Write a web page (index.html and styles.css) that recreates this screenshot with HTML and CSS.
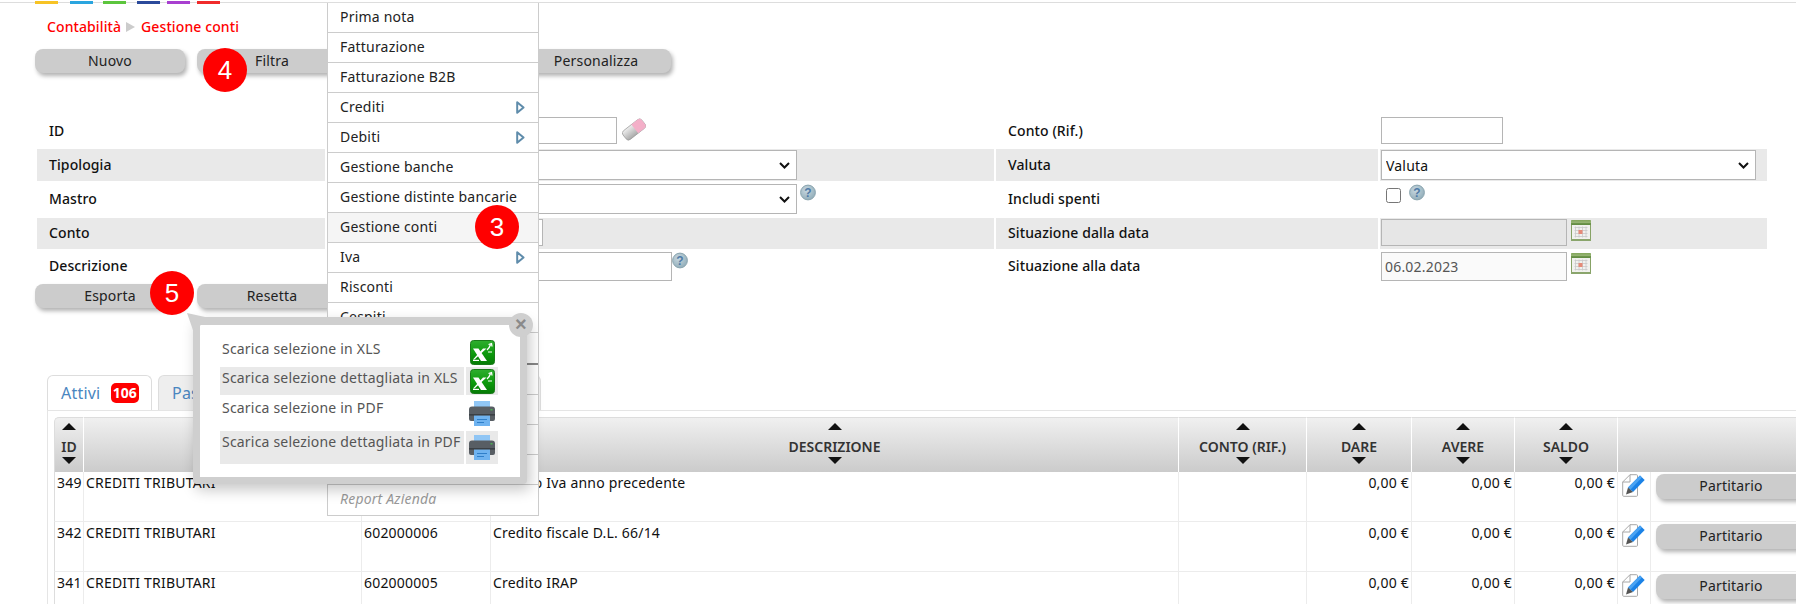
FILE: index.html
```html
<!DOCTYPE html>
<html lang="it">
<head>
<meta charset="utf-8">
<title>Gestione conti</title>
<link rel="stylesheet" href="styles.css">
</head>
<body>
<svg class="defs" aria-hidden="true">
  <defs>
    <linearGradient id="g-eraser" x1="0" y1="0" x2="0" y2="1"><stop offset="0" stop-color="#eee"/><stop offset="1" stop-color="#aaa"/></linearGradient>
    <radialGradient id="g-help" cx=".4" cy=".35" r=".8"><stop offset="0" stop-color="#c8d8e0"/><stop offset="1" stop-color="#87a5b2"/></radialGradient>
    <linearGradient id="g-xls" x1="0" y1="0" x2="0" y2="1"><stop offset="0" stop-color="#2fae2f"/><stop offset=".55" stop-color="#0c9a0c"/><stop offset="1" stop-color="#067a06"/></linearGradient>
    <linearGradient id="g-cal" x1="0" y1="0" x2="0" y2="1"><stop offset="0" stop-color="#8aab62"/><stop offset="1" stop-color="#5f8a40"/></linearGradient>
    <symbol id="i-arrow" viewBox="0 0 9 13"><path d="M1.2 1.2 L7.5 6.5 L1.2 11.8 Z" fill="#fff" stroke="#5f8cab" stroke-width="2" stroke-linejoin="round"/></symbol>
    <symbol id="i-eraser" viewBox="0 0 24 23">
      <g transform="rotate(-38 12 11.5)">
        <rect x="0" y="6" width="24" height="11" rx="3" fill="url(#g-eraser)" stroke="#999" stroke-width=".7"/>
        <path d="M13 6 H21 A3 3 0 0 1 24 9 V14 A3 3 0 0 1 21 17 H13 Z" fill="#f3afc8"/>
      </g>
    </symbol>
    <symbol id="i-help" viewBox="0 0 16 17">
      <circle cx="8" cy="8.5" r="7.4" fill="url(#g-help)" stroke="#8aa4ae" stroke-width="1"/>
      <text x="8" y="13" text-anchor="middle" font-family="Liberation Sans, sans-serif" font-weight="700" font-size="12" fill="#4f7aa6">?</text>
    </symbol>
    <symbol id="i-cal" viewBox="0 0 20 21">
      <rect x=".5" y=".5" width="19" height="20" rx="1" fill="#f1f1ee" stroke="#87a266"/>
      <rect x="0" y="0" width="20" height="5" rx="1" fill="url(#g-cal)"/>
      <rect x="0" y="1.6" width="20" height="1" fill="#a9c488"/>
      <rect x="0" y="19" width="20" height="2" fill="#8aa56c"/>
      <path d="M3.5 7.5H16.5M3.5 10.5H16.5M3.5 13.5H16.5M3.5 16.5H16.5M4.5 6.5V17.5M8 6.5V17.5M11.5 6.5V17.5M15 6.5V17.5" stroke="#c9c9c9" stroke-width=".8"/>
      <rect x="7.5" y="10" width="4" height="4" fill="#e58a78"/>
    </symbol>
    <symbol id="i-xls" viewBox="0 0 25 25">
      <rect x=".5" y=".5" width="24" height="24" rx="3" fill="url(#g-xls)" stroke="#1a7a1a"/>
      <path d="M3 8.5 H8.5 L17 21 H11 Z" fill="#fff"/>
      <path d="M16.5 8.5 L4.5 19.5 H3 L13 8.5 Z" fill="#fff"/>
      <path d="M3 21 H9 V19.8 H3 Z" fill="#fff"/>
      <path d="M17 10 Q19.5 8 20.5 4.5 M18.5 4.5 L21.5 3.5 L22 6.5" stroke="#fff" stroke-width="1.3" fill="none"/>
      <path d="M18 12 H22" stroke="#fff" stroke-width="1"/>
    </symbol>
    <symbol id="i-print" viewBox="0 0 26 25">
      <rect x="5" y="0" width="16" height="8" fill="#90c6f5"/>
      <path d="M3 5.5 H23 A3 3 0 0 1 26 8.5 V18 A2 2 0 0 1 24 20 H2 A2 2 0 0 1 0 18 V8.5 A3 3 0 0 1 3 5.5Z" fill="#585e64"/>
      <rect x="0" y="13" width="26" height="1.6" fill="#3b4045"/>
      <rect x="21.5" y="8" width="2" height="1.5" fill="#4caf50"/>
      <rect x="5" y="14.6" width="16" height="10.4" fill="#6fb3f0"/>
      <path d="M8 18.5 H18 M8 21.5 H15" stroke="#2f7fc9" stroke-width="1"/>
    </symbol>
    <symbol id="i-pencil" viewBox="0 0 23 23">
      <path d="M.7 8 L8 .7 H14.5 A1 1 0 0 1 15.5 1.7 V21.3 A1 1 0 0 1 14.5 22.3 H1.7 A1 1 0 0 1 .7 21.3 Z" fill="#fff" stroke="#a8a8a8"/>
      <path d="M.7 8 H8 V.7" fill="none" stroke="#a8a8a8"/>
      <path d="M18 1.5 L22.7 6 L11 18 L6 13.5 Z" fill="#1b82e6"/>
      <path d="M18 1.5 L20 3.4 L8.5 15.5 L6 13.5 Z" fill="#4ba3f2"/>
      <path d="M6 13.5 L11 18 L4 20.5 Z" fill="#555"/>
    </symbol>
  </defs>
</svg>

<header class="topline">
  <span class="tick tick-a"></span><span class="tick tick-b"></span><span class="tick tick-c"></span><span class="tick tick-d"></span><span class="tick tick-e"></span><span class="tick tick-f"></span>
</header>

<main class="page">
  <nav class="crumbs"><span>Contabilità</span><i class="crumb-sep"></i><span>Gestione conti</span></nav>

  <div class="btnrow">
    <button class="btn">Nuovo</button>
    <button class="btn">Filtra</button>
    <button class="btn">Ordina</button>
    <button class="btn">Personalizza</button>
  </div>

  <section class="form">
    <div class="lab r-a">ID</div>
    <div class="val pad-a"><input class="fld w-id"><svg class="ic-eraser"><use href="#i-eraser"/></svg></div>
    <div class="lab r-a">Conto (Rif.)</div>
    <div class="val2 pad-a"><input class="fld w-rif"></div>

    <div class="lab shade">Tipologia</div>
    <div class="val shade pad-b"><select class="sel w-sel"><option></option></select></div>
    <div class="lab shade">Valuta</div>
    <div class="val2 shade pad-b"><select class="sel w-val"><option>Valuta</option></select></div>

    <div class="lab">Mastro</div>
    <div class="val pad-c"><select class="sel w-sel"><option></option></select><svg class="ic-help help-m"><use href="#i-help"/></svg></div>
    <div class="lab">Includi spenti</div>
    <div class="val2 pad-c"><input type="checkbox" class="chk"><svg class="ic-help help-c"><use href="#i-help"/></svg></div>

    <div class="lab shade">Conto</div>
    <div class="val shade pad-b"><input class="fld w-conto"></div>
    <div class="lab shade">Situazione dalla data</div>
    <div class="val2 shade pad-b"><input class="fld w-date off" disabled><svg class="ic-cal"><use href="#i-cal"/></svg></div>

    <div class="lab">Descrizione</div>
    <div class="val pad-c"><input class="fld w-desc"><svg class="ic-help"><use href="#i-help"/></svg></div>
    <div class="lab">Situazione alla data</div>
    <div class="val2 pad-c"><input class="fld w-date soft" value="06.02.2023"><svg class="ic-cal"><use href="#i-cal"/></svg></div>
  </section>

  <div class="btnrow btnrow-low">
    <button class="btn">Esporta</button>
    <button class="btn">Resetta</button>
  </div>

  <div class="tabs">
    <div class="tab on">Attivi <b class="count">106</b></div>
    <div class="tab off">Passivi</div>
  </div>

  <div class="panel">
    <table class="grid">
      <colgroup>
        <col class="c-id"><col class="c-mas"><col class="c-con"><col class="c-des"><col class="c-rif"><col class="c-dar"><col class="c-ave"><col class="c-sal"><col class="c-edt"><col class="c-par">
      </colgroup>
      <thead>
        <tr>
          <th><i class="up"></i>ID<i class="dn"></i></th>
          <th><i class="up"></i>MASTRO<i class="dn"></i></th>
          <th><i class="up"></i>CONTO<i class="dn"></i></th>
          <th><i class="up"></i>DESCRIZIONE<i class="dn"></i></th>
          <th><i class="up"></i>CONTO (RIF.)<i class="dn"></i></th>
          <th><i class="up"></i>DARE<i class="dn"></i></th>
          <th><i class="up"></i>AVERE<i class="dn"></i></th>
          <th><i class="up"></i>SALDO<i class="dn"></i></th>
          <th colspan="2"></th>
        </tr>
      </thead>
      <tbody>
        <tr>
          <td>349</td><td>CREDITI TRIBUTARI</td><td>602000007</td><td>Credito Iva anno precedente</td><td></td>
          <td class="num">0,00 €</td><td class="num">0,00 €</td><td class="num">0,00 €</td>
          <td class="edit"><svg class="ic-pencil"><use href="#i-pencil"/></svg></td>
          <td class="act"><button class="btn btn-row">Partitario</button></td>
        </tr>
        <tr>
          <td>342</td><td>CREDITI TRIBUTARI</td><td>602000006</td><td>Credito fiscale D.L. 66/14</td><td></td>
          <td class="num">0,00 €</td><td class="num">0,00 €</td><td class="num">0,00 €</td>
          <td class="edit"><svg class="ic-pencil"><use href="#i-pencil"/></svg></td>
          <td class="act"><button class="btn btn-row">Partitario</button></td>
        </tr>
        <tr>
          <td>341</td><td>CREDITI TRIBUTARI</td><td>602000005</td><td>Credito IRAP</td><td></td>
          <td class="num">0,00 €</td><td class="num">0,00 €</td><td class="num">0,00 €</td>
          <td class="edit"><svg class="ic-pencil"><use href="#i-pencil"/></svg></td>
          <td class="act"><button class="btn btn-row">Partitario</button></td>
        </tr>
      </tbody>
    </table>
  </div>
</main>

<ul class="menu">
  <li>Prima nota</li>
  <li>Fatturazione</li>
  <li>Fatturazione B2B</li>
  <li>Crediti<svg class="ic-arrow"><use href="#i-arrow"/></svg></li>
  <li>Debiti<svg class="ic-arrow"><use href="#i-arrow"/></svg></li>
  <li>Gestione banche</li>
  <li>Gestione distinte bancarie</li>
  <li class="hover">Gestione conti</li>
  <li>Iva<svg class="ic-arrow"><use href="#i-arrow"/></svg></li>
  <li>Risconti</li>
  <li>Cespiti</li>
  <li class="thick"></li>
  <li></li>
  <li></li>
  <li></li>
  <li></li>
  <li class="muted">Report Azienda</li>
</ul>

<aside class="popup">
  <span class="close">×</span>
  <div class="pop-grid">
    <div class="pop-t">Scarica selezione in XLS</div>
    <div class="pop-i"><svg class="ic-xls"><use href="#i-xls"/></svg></div>
    <div class="pop-t alt">Scarica selezione dettagliata in XLS</div>
    <div class="pop-i alt"><svg class="ic-xls"><use href="#i-xls"/></svg></div>
    <div class="pop-t low">Scarica selezione in PDF</div>
    <div class="pop-i low"><svg class="ic-print"><use href="#i-print"/></svg></div>
    <div class="pop-t alt">Scarica selezione dettagliata in PDF</div>
    <div class="pop-i alt"><svg class="ic-print"><use href="#i-print"/></svg></div>
  </div>
</aside>

<span class="step step-4">4</span>
<span class="step step-3">3</span>
<span class="step step-5">5</span>
</body>
</html>
```
FILE: styles.css
```css
* { box-sizing: border-box; }
html, body { margin: 0; padding: 0; height: 604px; overflow: hidden; background: #fff; }
body { font-family: "Noto Sans", "Open Sans", sans-serif; font-size: 14px; letter-spacing: .2px; color: #111; position: relative; }
.defs { position: absolute; width: 0; height: 0; }

.topline { height: 3px; border-bottom: 1px solid #ddd; display: flex; padding-left: 35px; padding-top: 1px; }
.tick { display: block; width: 23px; height: 3px; }
.tick-a { background: #f7c325; }
.tick-b { background: #2aa5df; margin-left: 12px; }
.tick-c { background: #5cc53d; margin-left: 10px; }
.tick-d { background: #2b4a9b; margin-left: 11px; }
.tick-e { background: #a83fd0; margin-left: 7px; }
.tick-f { background: #f02b2b; margin-left: 7px; }

.page { width: 2000px; }

.crumbs { margin: 14px 0 0 47px; height: 20px; line-height: 20px; color: #f00; font-weight: 500; letter-spacing: .1px; display: flex; align-items: center; font-size: 14px; }
.crumb-sep { width: 0; height: 0; margin: 0 6px 0 5px; border-left: 9px solid #ccc; border-top: 5px solid transparent; border-bottom: 5px solid transparent; }

.btnrow { display: flex; gap: 12px; margin: 12px 0 0 35px; }
.btnrow-low { margin-top: 1px; }
.btn { width: 150px; height: 24px; border: 0; border-radius: 8px; background: #ccc; color: #222; font: inherit; letter-spacing: inherit; font-size: 14px; padding: 0 0 1px; box-shadow: 2px 3px 4px rgba(0,0,0,.3); }

.form { margin: 44px 0 0 37px; width: 1730px; display: grid; grid-template-columns: 288px 667px 382px 387px; column-gap: 2px; grid-template-rows: 32px 32px 37px 31px 34px; }
.lab { display: flex; align-items: center; font-weight: 500; letter-spacing: .1px; padding: 0 0 2px 12px; color: #111; }
.lab.r-a { padding-bottom: 6px; }
.shade { background: #e9e9e9; }
.val { display: flex; align-items: flex-start; padding-left: 13px; }
.val2 { display: flex; align-items: flex-start; padding-left: 1px; }
.pad-a { padding-top: 0; }
.pad-b { padding-top: 1px; }
.pad-c { padding-top: 3px; }
.fld { height: 27px; border: 1px solid #b5b5b5; background: #fff; padding: 0 3px; font: inherit; letter-spacing: inherit; font-size: 14px; color: #111; border-radius: 0; }
.sel { height: 30px; border: 1px solid #b5b5b5; font: inherit; letter-spacing: inherit; font-size: 14px; color: #111; border-radius: 0; padding-left: 4px; appearance: none; background: #fff url("data:image/svg+xml,%3Csvg xmlns='http://www.w3.org/2000/svg' width='11' height='7'%3E%3Cpath d='M1 1 L5.5 5.5 L10 1' fill='none' stroke='%23111' stroke-width='2'/%3E%3C/svg%3E") no-repeat right 6px center; }
.w-id { width: 277px; }
.w-rif { width: 122px; }
.w-sel { width: 457px; }
.w-val { width: 375px; }
.w-conto { width: 203px; }
.w-desc { width: 332px; height: 29px; }
.w-date { width: 186px; }
.pad-c .w-date { height: 29px; }
.off { background: #e6e6e6; }
.soft { background: #fafafa; color: #555; }
.chk { width: 15px; height: 15px; margin: 4px 0 0 5px; }

.ic-eraser { width: 24px; height: 23px; margin: 1px 0 0 5px; flex: none; }
.ic-help { width: 16px; height: 17px; flex: none; }
.help-m { margin: 0 0 0 3px; }
.help-c { margin: 0 0 0 8px; }
.ic-cal { width: 20px; height: 21px; margin: 1px 0 0 4px; flex: none; }

.tabs { display: flex; gap: 6px; margin: 67px 0 0 47px; height: 35px; align-items: flex-end; }
.tab { height: 35px; line-height: 35px; padding-left: 13px; border: 1px solid #ddd; border-bottom: 0; border-radius: 6px 6px 0 0; font-size: 16px; color: #4a86c0; }
.tab.on { width: 105px; background: #fff; }
.tab.off { width: 383px; background: #eee; }
.count { display: inline-block; margin-left: 6px; width: 28px; height: 20px; line-height: 20px; text-align: center; background: #f00; color: #fff; border-radius: 5px; font-size: 14px; letter-spacing: 0; font-weight: 700; vertical-align: 1px; }

.panel { margin-left: 47px; border-top: 1px solid #e5e5e5; border-left: 1px solid #e5e5e5; padding: 6px 0 0 6px; width: 1900px; }
.grid { border-collapse: separate; border-spacing: 0; table-layout: fixed; width: 1771px; }
.c-id { width: 30px; } .c-mas { width: 278px; } .c-con { width: 129px; } .c-des { width: 688px; }
.c-rif { width: 128px; } .c-dar { width: 105px; } .c-ave { width: 103px; } .c-sal { width: 103px; }
.c-edt { width: 33px; } .c-par { width: 174px; }
.grid th { height: 55px; padding: 5px 0 0; vertical-align: top; text-align: center; background: linear-gradient(#f0f0f0, #cbcbcb); border-top: 1px solid #ddd; border-right: 1px solid #fff; font-size: 14px; line-height: 20px; font-weight: 600; letter-spacing: 0; color: #333; }
.grid th:first-child { border-left: 1px solid #ddd; border-top-left-radius: 5px; }
.grid th:last-child { border-right: 0; }
.up, .dn { display: block; width: 0; height: 0; margin: 0 auto; border-left: 7px solid transparent; border-right: 7px solid transparent; }
.up { border-bottom: 7px solid #111; margin-bottom: 7px; }
.dn { border-top: 7px solid #111; }
.grid td { height: 50px; padding: 1px 2px 0; vertical-align: top; border-right: 1px solid #ececec; border-bottom: 1px solid #ececec; line-height: 20px; white-space: nowrap; overflow: hidden; }
.grid td:first-child { border-left: 1px solid #ddd; }
.grid td.num { text-align: right; }
.grid td.edit { padding: 2px 0 0 4px; }
.grid td.act { padding: 2px 0 0 5px; border-right: 0; overflow: visible; }
.ic-pencil { width: 23px; height: 23px; display: block; }
.btn-row { display: block; height: 25px; }

.menu { position: absolute; left: 327px; top: 3px; width: 212px; margin: 0; padding: 0; list-style: none; background: #fff; border: 1px solid #ccc; border-top: 0; z-index: 2; }
.menu li { height: 30px; line-height: 28px; padding-left: 12px; border-bottom: 1px solid #ccc; color: #222; position: relative; }
.menu li:last-child { border-bottom: 0; }
.menu li.hover { background: #f5f5f5; }
.menu li.thick { height: 32px; border-bottom: 2px solid #888; }
.menu li.muted { color: #999; font-style: italic; }
.ic-arrow { position: absolute; right: 13px; top: 8px; width: 9px; height: 13px; }

.popup { position: absolute; left: 193px; top: 317px; width: 334px; height: 167px; background: #fff; border: solid #cfcfcf; border-width: 8px 7px 7px; border-radius: 4px; box-shadow: 3px 6px 14px rgba(0,0,0,.22); z-index: 3; color: #555; }
.popup::before { content: ""; position: absolute; left: -13px; top: -12px; width: 18px; height: 17px; background: #cfcfcf; clip-path: polygon(0 0, 100% 24%, 78% 71%, 33% 100%); }
.close { position: absolute; right: -13px; top: -12px; width: 24px; height: 24px; line-height: 22px; text-align: center; border-radius: 50%; background: #cfcfcf; color: #8a8a8a; font-family: "Liberation Sans", sans-serif; font-size: 20px; font-weight: 700; }
.pop-grid { display: grid; grid-template-columns: 244px 32px; column-gap: 2px; grid-template-rows: 29px 28px 36px 33px; margin: 13px 0 0 20px; }
.pop-t { padding-left: 2px; line-height: 22px; white-space: nowrap; }
.pop-t.low { padding-top: 2px; }
.pop-i { display: flex; align-items: center; justify-content: center; }
.alt { background: #e9e9e9; }
.ic-xls { width: 25px; height: 25px; }
.ic-print { width: 26px; height: 25px; }

.step { position: absolute; width: 44px; height: 44px; line-height: 44px; border-radius: 50%; background: #f00; color: #fff; text-align: center; font-family: "Liberation Sans", sans-serif; font-size: 26px; z-index: 4; }
.step-4 { left: 203px; top: 48px; }
.step-3 { left: 475px; top: 205px; }
.step-5 { left: 150px; top: 271px; }
```
